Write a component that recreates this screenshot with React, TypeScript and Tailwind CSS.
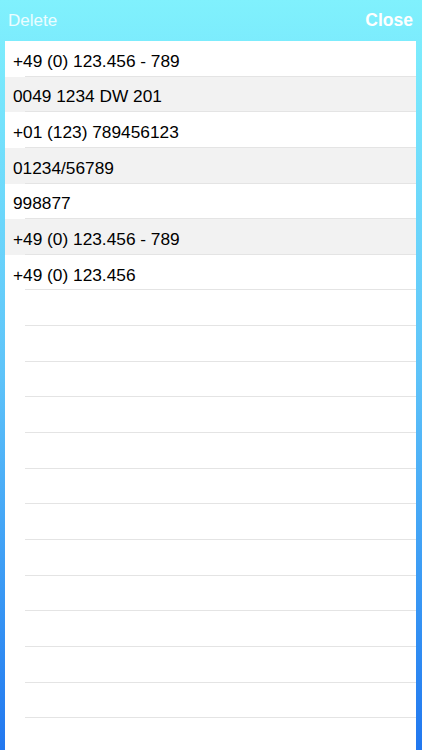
import React from "react";

const numbers: string[] = [
  "+49 (0) 123.456 - 789",
  "0049 1234 DW 201",
  "+01 (123) 789456123",
  "01234/56789",
  "998877",
  "+49 (0) 123.456 - 789",
  "+49 (0) 123.456",
];

const ROW_COUNT = 20;

export default function App() {
  const rows = Array.from({ length: ROW_COUNT }, (_, i) => numbers[i] ?? null);

  return (
    <div
      className="h-[750px] w-full overflow-hidden bg-gradient-to-b from-[#80f1fd] via-[#5ec3f9] to-[#2277ef] flex flex-col"
      style={{ fontFamily: '"Liberation Sans", Arial, sans-serif' }}
    >
      {/* Header */}
      <div className="h-[41px] shrink-0 flex items-center justify-between pl-[8px] pr-[9px]">
        <button className="text-[17px] text-white/85">Delete</button>
        <button className="text-[17.5px] text-white font-semibold">Close</button>
      </div>

      {/* List */}
      <div className="flex-1 bg-white ml-[5px] mr-[6px] overflow-hidden">
        {rows.map((value, i) => (
          <div
            key={i}
            className={`h-[35.65px] relative ${value && i % 2 === 1 ? "bg-[#f2f2f2]" : "bg-white"}`}
          >
            <div className="h-full flex items-center pt-[6px] pl-[8px] text-[17.3px] text-black">
              {value}
            </div>
            <div className="absolute bottom-0 left-[20px] right-0 h-px bg-[#e4e4e4]" />
          </div>
        ))}
      </div>
    </div>
  );
}
